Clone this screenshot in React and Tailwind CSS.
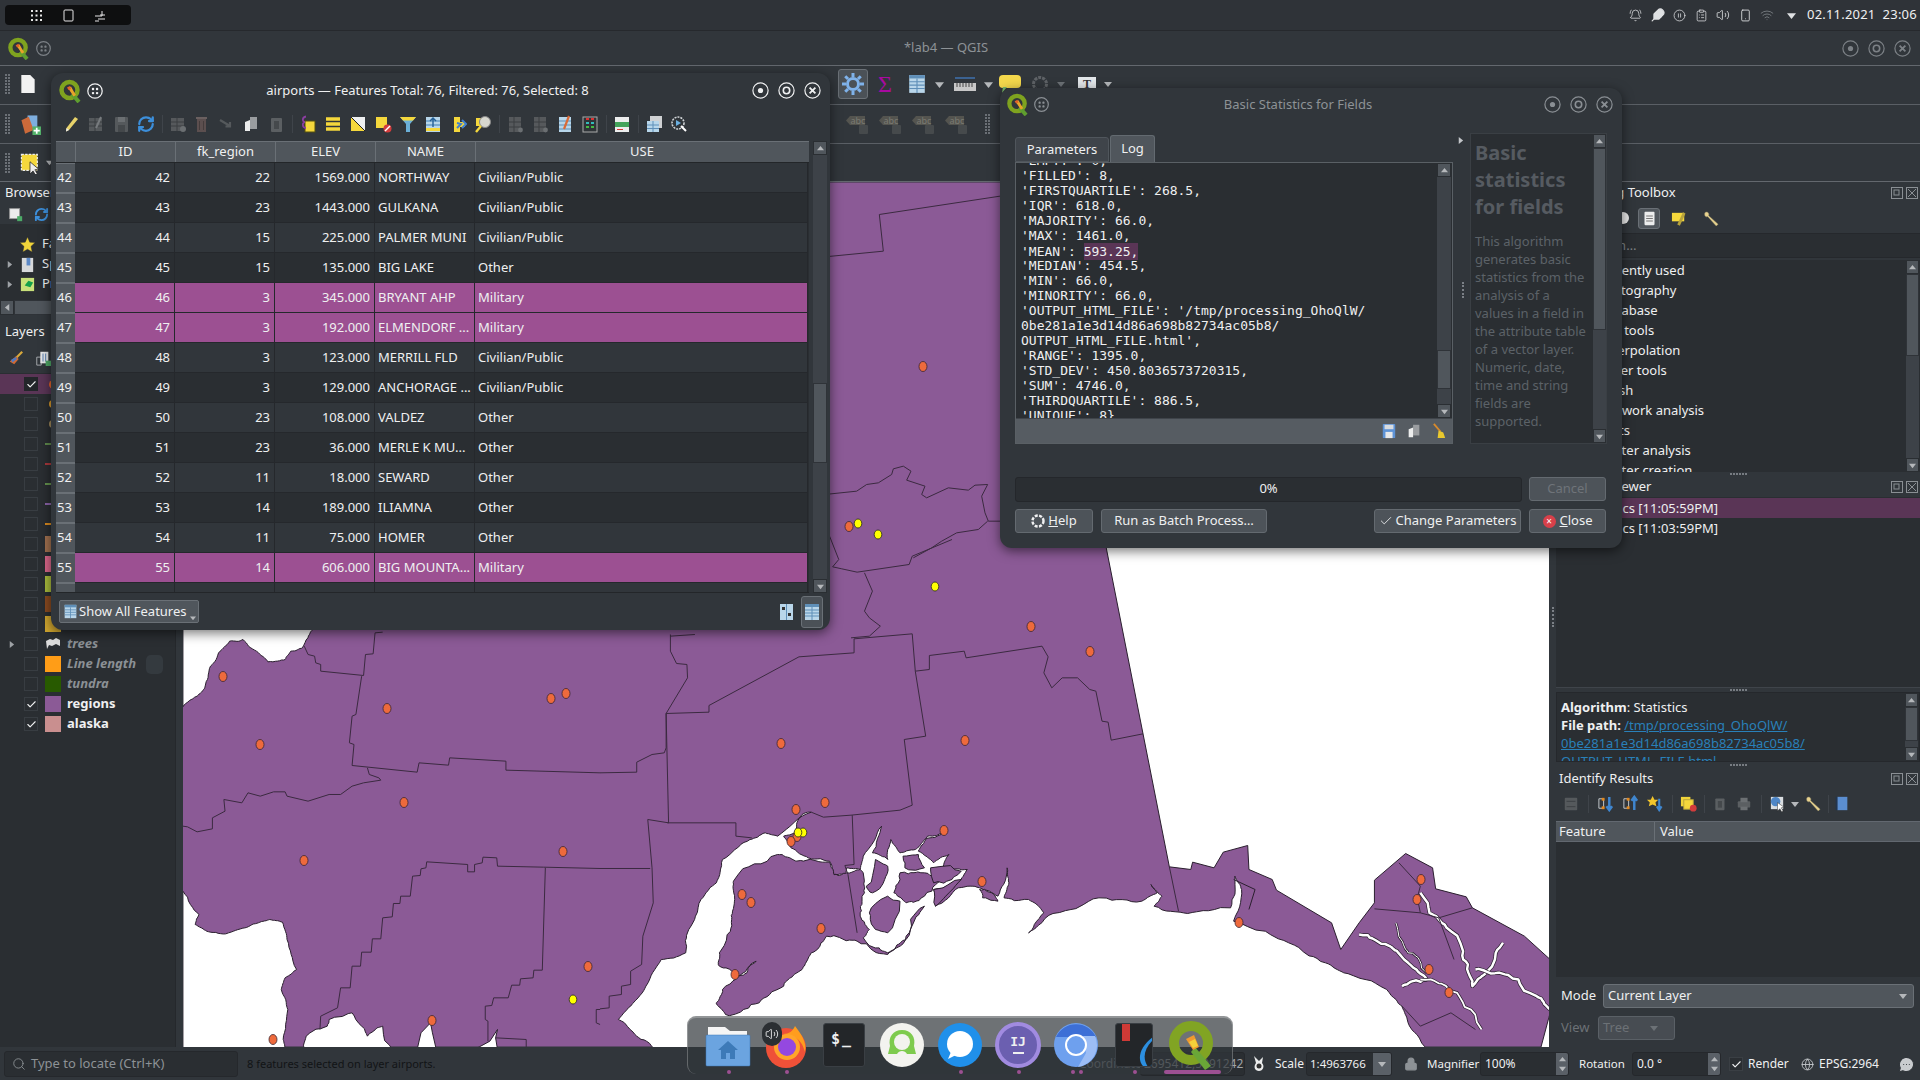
import React from 'react';
import { BellRing, Feather, CirclePause, ClipboardList, Volume2, Smartphone, Wifi, Search, RefreshCw, Check, Lock, Globe, MessageCircleMore } from 'lucide-react';

const Logo = ({ s = 22 }) => (
  <svg width={s} height={s} viewBox="0 0 24 24" className="shrink-0">
    <circle cx="11.5" cy="11" r="8" fill="none" stroke="#7fa31f" strokeWidth="4.5" />
    <path d="M14 15 L21 23" stroke="#5f9e2f" strokeWidth="4" />
    <path d="M10 9 L13 7.5 L15.5 12 L18 16 L15.5 17.5 Z" fill="#e8a32a" />
    <path d="M9 8.5 L12 7 L13 10 L10.5 11 Z" fill="#e2632a" />
  </svg>
);
const Grip = ({ c = '#a0a4a8', s = 20 }) => (
  <svg width={s} height={s} viewBox="0 0 20 20" className="shrink-0">
    <circle cx="10" cy="10" r="8" fill="none" stroke={c} strokeWidth="1.4" />
    <g fill={c}><rect x="6.5" y="6.5" width="2.6" height="2.6" rx="1" /><rect x="11" y="6.5" width="2.6" height="2.6" rx="1" /><rect x="6.5" y="11" width="2.6" height="2.6" rx="1" /><rect x="11" y="11" width="2.6" height="2.6" rx="1" /></g>
  </svg>
);
const WinBtns = ({ c, gap }) => (
  <div className={`flex items-center ${gap}`}>
    <svg width="17" height="17" viewBox="0 0 17 17"><circle cx="8.5" cy="8.5" r="7.6" fill="none" stroke={c} strokeWidth="1.2" /><circle cx="8.5" cy="8.5" r="2.6" fill={c} /></svg>
    <svg width="17" height="17" viewBox="0 0 17 17"><circle cx="8.5" cy="8.5" r="7.6" fill="none" stroke={c} strokeWidth="1.2" /><circle cx="8.5" cy="8.5" r="3.2" fill="none" stroke={c} strokeWidth="1.6" /></svg>
    <svg width="17" height="17" viewBox="0 0 17 17"><circle cx="8.5" cy="8.5" r="7.6" fill="none" stroke={c} strokeWidth="1.2" /><path d="M5.6 5.6 L11.4 11.4 M11.4 5.6 L5.6 11.4" stroke={c} strokeWidth="1.8" /></svg>
  </div>
);
const Handle = ({ h = 'h-[20px]' }) => (
  <div className={`grid grid-cols-2 gap-x-[1px] gap-y-[1px] w-[5px] ${h} shrink-0 overflow-hidden content-start`}>
    {Array.from({ length: 14 }).map((_, i) => <span key={i} className="w-[2px] h-[2px] bg-[#6b7076]" />)}
  </div>
);
const Caret = ({ c = '#b5b8bb', dir = 'down', s = 8 }) => (
  <svg width={s} height={s} viewBox="0 0 8 8" className="shrink-0">
    {dir === 'down' && <path d="M0 2 H8 L4 7 Z" fill={c} />}
    {dir === 'up' && <path d="M0 6 H8 L4 1 Z" fill={c} />}
    {dir === 'right' && <path d="M2 0 V8 L7 4 Z" fill={c} />}
    {dir === 'left' && <path d="M6 0 V8 L1 4 Z" fill={c} />}
  </svg>
);
const Sep = ({ cls = 'mx-[3px]' }) => <span className={`w-px h-[18px] bg-[#3f444a] shrink-0 ${cls}`} />;

const Y = '#f5d83c';
const icons = {
  pencil: <><path d="M13 2 L16 4 L7 15 L4 16.5 L4.5 13 Z" fill="#e8d36a" /><path d="M4.5 13 L4 16.5 L7 15 Z" fill="#eee" /></>,
  gtable: <><rect x="2" y="3" width="13" height="13" fill="#55595c" /><path d="M2 7H15M2 11H15M8 3V16" stroke="#3a3e41" /><path d="M14 2 L9 13" stroke="#777b7e" strokeWidth="2" /></>,
  gsave: <><rect x="3" y="2" width="13" height="15" rx="1" fill="#55595c" /><rect x="6" y="2" width="7" height="5" fill="#6b6f72" /><rect x="6" y="10" width="7" height="7" fill="#44484b" /></>,
  gadd: <><rect x="2" y="3" width="13" height="13" fill="#56595c" /><path d="M2 7H15M2 11H15M8 3V16" stroke="#3a3e41" /><circle cx="14" cy="14" r="3" fill="#6b6f72" /></>,
  gtrash: <><rect x="5" y="4" width="9" height="13" fill="#5c4f4f" /><path d="M4 3H15" stroke="#6a6060" strokeWidth="2" /><path d="M7.5 6V15M11.5 6V15" stroke="#453c3c" /></>,
  garrow: <path d="M3 5 L13 11 M13 7 V11.5 H8.5" stroke="#55595c" strokeWidth="2.2" fill="none" />,
  copy: <><rect x="8" y="2" width="7" height="12" fill="#9a9da0" /><path d="M3 7 L8 5 V16 H3 Z" fill="#eceded" /></>,
  gpaste: <><rect x="4" y="3" width="11" height="14" rx="1" fill="#5b5f62" /><rect x="7" y="6" width="5" height="8" fill="#45494c" /></>,
  selexp: <><rect x="6" y="6" width="10" height="11" fill={Y} stroke="#55500f" /><path d="M7 1.5 C3 2 3 7 6 7 C3 7 3 13 7 13" stroke="#8a3ea0" strokeWidth="1.8" fill="none" /></>,
  selall: <path d="M2 4 H16 M2 9 H16 M2 14 H16" stroke={Y} strokeWidth="3.4" />,
  invert: <><rect x="2" y="2" width="14" height="14" fill={Y} /><path d="M2 2 H16 V16 Z" fill="#eef0f1" /><path d="M2 2 L16 16" stroke="#222" /></>,
  desel: <><rect x="2" y="2" width="11" height="11" fill={Y} /><circle cx="13.5" cy="13.5" r="4" fill="#d23c3c" /><path d="M11 16 L16 11" stroke="#fff" strokeWidth="1.4" /></>,
  funnel: <><path d="M1 2 H17 L11 9 V17 H7 V9 Z" fill="#6bb0d8" /><path d="M1 2 H17 L14 5.5 H4 Z" fill={Y} /></>,
  blue: <><rect x="2" y="2" width="14" height="15" fill="#b7d6ea" /><path d="M2 6H16M2 10H16" stroke="#3f7fb5" /><path d="M9 3V12M6 6 L9 3 L12 6" stroke="#245f96" strokeWidth="1.4" fill="none" /><rect x="2" y="13" width="14" height="3" fill={Y} /></>,
  pan: <><path d="M5 2 H11 V7 H16 V12 H11 V17 H5 Z" fill={Y} /><path d="M13 5 L17 9 L13 13 M8 8 L12 9 L8 13" fill="none" stroke="#3f7fd0" strokeWidth="2" /></>,
  zoomsel: <><rect x="2" y="3" width="8" height="8" fill={Y} /><circle cx="11" cy="7" r="5.5" fill="#d7d7cf" stroke="#888" /><path d="M7 11 L2 17" stroke={Y} strokeWidth="2.4" /></>,
  gcol: <><rect x="3" y="2" width="12" height="15" fill="#56595c" /><path d="M8 2V17M3 7H15M3 12H15" stroke="#3a3e41" /><circle cx="14.5" cy="15" r="2.4" fill="#6b6f72" /></>,
  calc: <><rect x="3" y="2" width="12" height="15" fill="#b7d6ea" /><path d="M3 6H15M3 10H15M3 14H15" stroke="#5f8fb8" /><path d="M13 1 L8 14" stroke="#d96a38" strokeWidth="2.2" /></>,
  abacus: <><rect x="2" y="2" width="14" height="15" fill="#2f3438" stroke="#aaa" /><path d="M5 4h3M10 4h3" stroke="#d33" strokeWidth="2" /><path d="M5 8h3M10 8h3" stroke="#3bb" strokeWidth="2" /><path d="M5 12h3M10 12h3" stroke="#4b4" strokeWidth="2" /></>,
  cond: <><rect x="2" y="2" width="14" height="5" fill="#eceded" /><rect x="2" y="7" width="14" height="5" fill="#43a35a" /><rect x="2" y="12" width="14" height="5" fill="#eceded" /><path d="M4 14.5H10" stroke="#d33" /></>,
  dock: <><rect x="5" y="1" width="12" height="12" fill="#cfd1d3" /><rect x="2" y="6" width="12" height="11" fill="#b7d6ea" /><path d="M2 10H14M2 13.5H14M8 6V17" stroke="#5f8fb8" /></>,
  action: <><circle cx="8" cy="8" r="6" fill="#2f3438" stroke="#cfd3d6" strokeWidth="1.6" strokeDasharray="2 1" /><path d="M6 5 L11 8 L6 11 Z" fill="#6bb0e0" /><path d="M11 11 L16 16" stroke="#fff" strokeWidth="2" /></>,
  newdoc: <path d="M3 1 H11 L15 5 V17 H3 Z" fill="#f2f2f2" />,
  newl: <><path d="M7 2 L15 2 V14 L7 14 Z" fill="#7eaede" /><path d="M2 6 L8 3 L12 14 L5 17 Z" fill="#cc6a3a" /><rect x="11" y="11" width="7" height="7" fill="#54b26a" /><path d="M14.5 12 V17 M12 14.5 H17" stroke="#fff" strokeWidth="1.4" /></>,
  selcur: <><rect x="2" y="2" width="13" height="13" fill={Y} stroke="#eee" strokeDasharray="2 1" /><path d="M9 8 V18 L11.5 15.5 L13.5 19 L15 18 L13 14.5 L16 14 Z" fill="#eee" stroke="#222" strokeWidth=".6" /></>,
  newbr: <><rect x="2" y="2" width="12" height="12" fill="#ececec" stroke="#999" /><rect x="11" y="11" width="6" height="6" fill="#4caa68" /></>,
  star: <path d="M9 1 L11.4 6.5 L17 7 L12.7 11 L14 17 L9 14 L4 17 L5.3 11 L1 7 L6.6 6.5 Z" fill="#f0d43a" stroke="#333" strokeWidth=".5" />,
  book: <><path d="M3 2 H15 V17 H3 Z" fill="#d7d9db" /><rect x="8" y="2" width="4" height="8" fill="#5d89c7" /></>,
  proj: <><rect x="2" y="2" width="14" height="14" fill="#c8e07a" /><path d="M6 10 L10 5 L15 7 L12 12 Z" fill="#14a04a" /></>,
  brush: <><path d="M16 2 L9 9" stroke="#d8a93c" strokeWidth="2.4" /><path d="M9 7 L12 10 L7 16 L2 13 Z" fill="#d16b35" /><path d="M3.5 11 L9 8 L10 10 L5 14 Z" fill="#4d79c4" /></>,
  laycopy: <><path d="M2 8 H7 V17 H2 Z" fill="none" stroke="#aeb1b4" /><rect x="6" y="2" width="9" height="13" fill="#e7e8e9" /><path d="M9 4V13M12 4V13" stroke="#4771a8" /><rect x="12" y="12" width="6" height="6" fill="#4fa966" /></>,
  gdoc: <><rect x="3" y="1" width="12" height="16" fill="#eceded" rx="1" /><path d="M5 6H13M5 9H13M5 12H13" stroke="#777" strokeWidth="1.4" /></>,
  flagpen: <><rect x="1" y="3" width="13" height="9" fill={Y} /><path d="M14 3 L8 16" stroke="#b7a33c" strokeWidth="3" /></>,
  wrench: <><path d="M2 3 C4 1 7 3 6 6 L16 15 L14 17 L5 7 C3 8 1 6 2 3 Z" fill="#e8d38f" stroke="#9a8f6a" strokeWidth=".5" /></>,
  gcollapse: <><rect x="2" y="2" width="14" height="14" rx="1" fill="#55595c" /><path d="M4 6H14M4 12H14" stroke="#3a3e41" /></>,
  expdn: <><path d="M2 4 H7 V14 H2 Z" fill="none" stroke="#c8ccd0" /><rect x="5" y="3" width="3" height="3" fill="#e28a20" /><rect x="5" y="12" width="3" height="3" fill="#e28a20" /><path d="M13 2 V15 M10 12 L13 16 L16 12" stroke="#3f86cf" strokeWidth="2.6" fill="none" /></>,
  expup: <><path d="M2 4 H7 V14 H2 Z" fill="none" stroke="#c8ccd0" /><rect x="5" y="3" width="3" height="3" fill="#e28a20" /><rect x="5" y="12" width="3" height="3" fill="#e28a20" /><path d="M13 16 V3 M10 6 L13 2 L16 6" stroke="#3f86cf" strokeWidth="2.6" fill="none" /></>,
  expnew: <><path d="M7 1 L9 5 L13 5 L10 8 L11 12 L7 10 L3 12 L4 8 L1 5 L5 5 Z" fill="#f2c52b" /><path d="M14 4 V15 M11.5 12 L14 16 L16.5 12" stroke="#3f86cf" strokeWidth="2.2" fill="none" /></>,
  clear: <><rect x="1" y="2" width="10" height="10" fill="#f0d43a" /><rect x="4" y="5" width="10" height="10" fill={Y} stroke="#b7a33c" /><circle cx="14" cy="14" r="3.6" fill="#d23c3c" /></>,
  gprint: <><rect x="2" y="6" width="14" height="7" rx="1" fill="#5b5f62" /><rect x="5" y="2" width="8" height="5" fill="#6c7073" /><rect x="5" y="12" width="8" height="4" fill="#6c7073" /></>,
  identify: <><rect x="2" y="2" width="13" height="13" fill="#d9dde0" /><circle cx="7" cy="7" r="5" fill="#4e86c6" /><path d="M9 8 V17 L11.5 14.5 L13.5 18 L15 17 L13 13.5 L16 13 Z" fill="#fff" stroke="#222" strokeWidth=".5" /></>,
  help: <><rect x="4" y="1" width="12" height="16" fill="#5b8ed0" /><rect x="2" y="1" width="2" height="16" fill="#21354f" /></>,
  save: <><rect x="2" y="1" width="14" height="16" rx="1" fill="#5e93d6" /><rect x="4" y="2" width="10" height="5" fill="#d9dcdf" /><rect x="5" y="10" width="8" height="7" fill="#e7e8e9" /></>,
  broom: <><path d="M3 1 L10 9" stroke="#d88a2c" strokeWidth="2" /><path d="M8 8 L13 10 L15 16 H7 Z" fill="#e9c82e" /></>,
  formview: <><rect x="2" y="1" width="13" height="16" fill="#b9d6ea" /><path d="M8.5 1V17" stroke="#5f8fb8" /><rect x="4" y="4" width="3" height="3" fill="#333" /><rect x="10" y="10" width="3" height="3" fill="#333" /></>,
  tableview: <><rect x="2" y="1" width="14" height="16" fill="#b9d6ea" /><rect x="2" y="1" width="14" height="3" fill="#5f8fb8" /><path d="M2 7H16M2 10H16M2 13H16M9 4V17" stroke="#5f8fb8" /></>,
};
const I = ({ k, s = 18, cls = '' }) => <svg width={s} height={s} viewBox="0 0 18 18" className={`shrink-0 ${cls}`}>{icons[k]}</svg>;
const Refresh = ({ s = 18, cls = '' }) => <RefreshCw size={s} strokeWidth={3} color="#3c8fdb" className={`shrink-0 ${cls}`} />;

const Scroll = ({ top, thumb, w = 'w-[14px]' }) => (
  <div className={`flex flex-col shrink-0 ${w} h-full bg-[#3d4248]`}>
    <div className="h-[14px] shrink-0 bg-[#50565c] border border-[#2a2e32] flex items-center justify-center"><Caret dir="up" s={7} /></div>
    <div className={`shrink-0 ${top}`} />
    <div className={`shrink-0 ${thumb} bg-[#50565c] border border-[#2f3338]`} />
    <div className="flex-1" />
    <div className="h-[14px] shrink-0 bg-[#50565c] border border-[#2a2e32] flex items-center justify-center"><Caret dir="down" s={7} /></div>
  </div>
);

const rows = [
  [42, 22, '1569.000', 'NORTHWAY', 'Civilian/Public'],
  [43, 23, '1443.000', 'GULKANA', 'Civilian/Public'],
  [44, 15, '225.000', 'PALMER MUNI', 'Civilian/Public'],
  [45, 15, '135.000', 'BIG LAKE', 'Other'],
  [46, 3, '345.000', 'BRYANT AHP', 'Military', 1],
  [47, 3, '192.000', 'ELMENDORF ...', 'Military', 1],
  [48, 3, '123.000', 'MERRILL FLD', 'Civilian/Public'],
  [49, 3, '129.000', 'ANCHORAGE ...', 'Civilian/Public'],
  [50, 23, '108.000', 'VALDEZ', 'Other'],
  [51, 23, '36.000', 'MERLE K MU...', 'Other'],
  [52, 11, '18.000', 'SEWARD', 'Other'],
  [53, 14, '189.000', 'ILIAMNA', 'Other'],
  [54, 11, '75.000', 'HOMER', 'Other'],
  [55, 14, '606.000', 'BIG MOUNTA...', 'Military', 1],
  [56, 7, '70.000', 'DILLINGHAM', 'Civilian/Public'],
];
const colGrid = 'grid grid-cols-[19px_100px_100px_100px_100px_333px]';

const AttributeWindow = () => (
  <div className="absolute left-[51px] top-[73px] w-[779px] h-[557px] bg-[#31363b] rounded-[12px] shadow-[0_3px_12px_rgba(0,0,0,0.55)] flex flex-col overflow-hidden">
    <div className="h-[35px] shrink-0 relative flex items-center pl-[7px] pr-[9px]">
      <Logo s={24} />
      <span className="ml-[4px]"><Grip c="#eff0f1" s={18} /></span>
      <span className="flex-1 text-center text-[13px] text-[#eff0f1] pr-[1px]">airports — Features Total: 76, Filtered: 76, Selected: 8</span>
      <WinBtns c="#eff0f1" gap="gap-[9px]" />
    </div>
    <div className="h-[33px] shrink-0 flex items-center pl-[11px] pb-[2px]">
      {['pencil', 'gtable', 'gsave'].map(k => <I key={k} k={k} cls="mr-[7px]" />)}
      <Refresh cls="mr-[7px]" />
      <Sep cls="mr-[6px]" />
      <span className="mr-[5px]"><I k="gadd" /></span>
      <I k="gtrash" cls="mr-[7px]" /><I k="garrow" cls="mr-[7px]" /><I k="copy" cls="mr-[7px]" /><I k="gpaste" cls="mr-[7px]" />
      <Sep cls="mr-[6px]" />
      {['selexp', 'selall', 'invert', 'desel', 'funnel', 'blue', 'pan', 'zoomsel'].map(k => <I key={k} k={k} cls="mr-[7px]" />)}
      <Sep cls="mr-[6px]" />
      {['gcol', 'gcol', 'calc', 'abacus'].map((k, i) => <I key={i} k={k} cls="mr-[7px]" />)}
      <Sep cls="mr-[6px]" />
      <I k="cond" cls="mr-[7px]" /><Sep cls="mr-[6px]" />
      <I k="dock" cls="mr-[7px]" /><I k="action" />
    </div>
    <div className="flex pl-[5px] h-[452px] shrink-0">
      <div className="w-[753px] h-full overflow-hidden bg-[#2a2e32] border-b border-[#232629]">
        <div className={`${colGrid} h-[22px] border-t border-[#6a7076] border-b border-b-[#232629] bg-[#50565c] text-[13px] text-[#eff0f1]`}>
          <span />
          {['ID', 'fk_region', 'ELEV', 'NAME', 'USE'].map(h => <span key={h} className="flex items-center justify-center border-l border-[#6a7076]">{h}</span>)}
        </div>
        {rows.map((r, i) => {
          const sel = r[5];
          const bg = sel ? 'bg-[#9c5092]' : i % 2 ? 'bg-[#2a2e32]' : 'bg-[#31363b]';
          return (
            <div key={r[0]} className={`${colGrid} h-[30px] text-[13px] text-[#eff0f1]`}>
              <span className="bg-[#50565c] border-y border-[#6a7076] flex items-center pl-[1px]">{r[0]}</span>
              {[[r[0], 'justify-end pr-[4px]'], [r[1], 'justify-end pr-[4px]'], [r[2], 'justify-end pr-[4px]'], [r[3], 'pl-[3px]'], [r[4], 'pl-[3px]']].map(([v, c], j) => (
                <span key={j} className={`${bg} border-b border-r border-[#25282c] flex items-center whitespace-nowrap overflow-hidden ${c}`}>{v}</span>
              ))}
            </div>
          );
        })}
      </div>
      <div className="w-[4px]" />
      <div className="w-[14px] h-full"><Scroll top="h-[228px]" thumb="h-[80px]" /></div>
    </div>
    <div className="flex-1 flex items-center pl-[8px] pr-[7px]">
      <div className="h-[23px] w-[140px] bg-[#50565c] border border-[#6a7076] rounded-[2px] flex items-center pl-[3px] text-[13px] text-[#eff0f1] relative">
        <I k="tableview" s={15} /><span className="ml-[1px]">Show All Features</span>
        <span className="absolute right-[2px] bottom-[1px]"><Caret s={6} /></span>
      </div>
      <div className="flex-1" />
      <I k="formview" />
      <div className="ml-[5px] w-[22px] h-[32px] bg-[#4b5157] border border-[#6a7076] rounded-[3px] flex items-center justify-center"><I k="tableview" /></div>
    </div>
  </div>
);

const logLines = ["'EMPTY': 0,", "'FILLED': 8,", "'FIRSTQUARTILE': 268.5,", "'IQR': 618.0,", "'MAJORITY': 66.0,", "'MAX': 1461.0,", 'MEAN', "'MEDIAN': 454.5,", "'MIN': 66.0,", "'MINORITY': 66.0,", "'OUTPUT_HTML_FILE': '/tmp/processing_OhoQlW/", '0be281a1e3d14d86a698b82734ac05b8/', "OUTPUT_HTML_FILE.html',", "'RANGE': 1395.0,", "'STD_DEV': 450.8036573720315,", "'SUM': 4746.0,", "'THIRDQUARTILE': 886.5,", "'UNIQUE': 8}"];
const help = ['This algorithm', 'generates basic', 'statistics from the', 'analysis of a', 'values in a field in', 'the attribute table', 'of a vector layer.', 'Numeric, date,', 'time and string', 'fields are', 'supported.'];
const Btn = ({ w, children, cls = '' }) => (
  <div className={`${w} h-[24px] shrink-0 bg-[#4d5359] border border-[#646a70] rounded-[3px] text-[13px] text-[#eff0f1] flex items-center justify-center ${cls}`}>{children}</div>
);

const StatsWindow = () => (
  <div className="absolute left-[1000px] top-[88px] w-[622px] h-[460px] bg-[#31363b] rounded-[12px] shadow-[0_3px_12px_rgba(0,0,0,0.55)] overflow-hidden flex flex-col">
    <div className="h-[33px] shrink-0 flex items-center pl-[6px] pr-[9px]">
      <Logo s={23} />
      <span className="ml-[4px]"><Grip c="#8a8f94" s={17} /></span>
      <span className="flex-1 text-center text-[13px] text-[#8d9296] pl-[2px]">Basic Statistics for Fields</span>
      <WinBtns c="#8a8f94" gap="gap-[9px]" />
    </div>
    <div className="flex pl-[15px] h-[323px] shrink-0">
      <div className="w-[438px] flex flex-col pt-[13px]">
        <div className="flex items-end h-[28px] shrink-0">
          <div className="w-[94px] h-[25px] bg-[#3f444a] border border-[#50565c] rounded-t-[3px] text-[13px] text-[#eff0f1] flex items-center justify-center">Parameters</div>
          <div className="ml-px w-[45px] h-[27px] bg-[#50565c] border border-[#636a70] border-b-0 rounded-t-[3px] text-[13px] text-[#eff0f1] flex items-center justify-center">Log</div>
        </div>
        <div className="h-[282px] border border-[#5a6065] flex flex-col bg-[#2a2e32]">
          <div className="h-[255px] flex overflow-hidden">
            <div className="flex-1 overflow-hidden pl-[5px] font-['DejaVu_Sans_Mono',monospace] text-[13px] leading-[15px] text-[#eff0f1]">
              <div className="-mt-[10px]">
                {logLines.map(l => l === 'MEAN'
                  ? <div key={l} className="h-[15px] whitespace-pre">{"'MEAN': "}<span className="bg-[#5a3556] inline-block leading-[17px] h-[17px]">593.25,</span></div>
                  : <div key={l} className="h-[15px] whitespace-pre">{l}</div>)}
              </div>
            </div>
            <div className="w-[14px] h-full mr-[1px]"><Scroll top="h-[173px]" thumb="h-[39px]" /></div>
          </div>
          <div className="flex-1 bg-[#565c62] border-t border-[#3f444a] flex items-center justify-end gap-[9px] pr-[4px]">
            <I k="save" s={16} /><I k="copy" s={16} /><I k="broom" s={17} />
          </div>
        </div>
      </div>
      <div className="w-[17px] relative">
        <span className="absolute left-[4px] top-[16px]"><Caret dir="right" s={7} c="#c3c6c9" /></span>
        <span className="absolute left-[9px] top-[161px] w-[2px] h-[16px] border-l-2 border-dotted border-[#7b8086]" />
      </div>
      <div className="w-[137px] h-[311px] mt-[12px] bg-[#2a2e32] border border-[#3a3f44] flex overflow-hidden">
        <div className="flex-1 pl-[4px] overflow-hidden">
          <div className="text-[20px] leading-[27px] font-bold text-[#565b61] mt-[5px]">Basic<br />statistics<br />for fields</div>
          <div className="text-[13px] leading-[18px] text-[#5c6268] mt-[12px] whitespace-nowrap">{help.map(h => <div key={h}>{h}</div>)}</div>
        </div>
        <div className="w-[13px] h-full"><Scroll w="w-[13px]" top="h-0" thumb="h-[182px]" /></div>
      </div>
    </div>
    <div className="h-[32px] shrink-0" />
    <div className="flex pl-[15px] items-center h-[26px] shrink-0">
      <div className="w-[507px] h-[25px] bg-[#2a2e32] border border-[#24272b] rounded-[3px] text-[13px] text-[#eff0f1] flex items-center justify-center">0%</div>
      <Btn w="w-[77px]" cls="ml-[7px] !text-[#6f7479]">Cancel</Btn>
    </div>
    <div className="flex pl-[15px] items-center h-[32px] shrink-0 mt-[3px]">
      <Btn w="w-[78px]"><svg width="14" height="14" viewBox="0 0 14 14" className="mr-[3px]"><circle cx="7" cy="7" r="5.5" fill="none" stroke="#eff0f1" strokeWidth="2.5" strokeDasharray="3 1.4" /></svg><span><span className="underline">H</span>elp</span></Btn>
      <Btn w="w-[166px]" cls="ml-[8px]">Run as Batch Process…</Btn>
      <Btn w="w-[147px]" cls="ml-[107px]"><Check size={14} strokeWidth={1.5} className="mr-[3px]" />Change Parameters</Btn>
      <Btn w="w-[77px]" cls="ml-[8px]"><span className="w-[13px] h-[13px] rounded-full bg-[#d8404a] mr-[4px] flex items-center justify-center text-[10px] leading-none text-white">×</span><span><span className="underline">C</span>lose</span></Btn>
    </div>
  </div>
);

const rough = (str, sx, sy, seed = 11, amp = 0.26, levels = 3, maxLen = 90) => {
  let p = str.trim().split(/\s+/).map(s => s.split(',').map(Number));
  let s = seed * 7919 + 13;
  const r = () => { s = (s * 16807) % 2147483647; return s / 2147483647 - 0.5; };
  for (let l = 0; l < levels; l++) {
    const n = [];
    p.forEach((a, i) => {
      const b = p[(i + 1) % p.length];
      const len = Math.hypot((a[0] - b[0]) * sx, (a[1] - b[1]) * sy);
      n.push(a);
      if (len > 2 && len < maxLen) n.push([(a[0] + b[0]) / 2 + (r() * amp * len) / sx, (a[1] + b[1]) / 2 + (r() * amp * len) / sy]);
    });
    p = n;
  }
  return p.map(q => q.map(v => v.toFixed(1)).join(',')).join(' ');
};

const dots = {
  orange: [[223, 677], [260, 745], [387, 709], [551, 699], [566, 694], [404, 803], [304, 861], [563, 852], [588, 967], [432, 1021], [273, 1040],
  [1031, 627], [1090, 652], [781, 744], [965, 741], [825, 803], [796, 810], [797, 837], [791, 842], [944, 831], [982, 882], [742, 895], [751, 903], [821, 929], [735, 975], [1239, 923], [1421, 880], [1417, 900], [1429, 970], [1449, 993], [849, 527], [923, 367]],
  yellow: [[573, 1000], [935, 587], [803, 833], [798, 833], [858, 524], [878, 535]],
};
const LN = '#3b2a40';
const CO = '#2a1f2e';
const MP = '#8b5a96';
const P = ({ p }) => <polyline points={p} fill="none" stroke={LN} strokeWidth="1" vectorEffect="non-scaling-stroke" strokeLinejoin="round" />;
const W = ({ p }) => <polygon points={p} fill="#ffffff" stroke={CO} strokeWidth="1" vectorEffect="non-scaling-stroke" strokeLinejoin="round" />;
const M = ({ p }) => <polygon points={p} fill={MP} stroke={CO} strokeWidth="1" vectorEffect="non-scaling-stroke" strokeLinejoin="round" />;
const Ch = ({ p, w = 2.5 }) => (
  <>
    <polyline points={p} fill="none" stroke={CO} strokeWidth={w + 1.4} vectorEffect="non-scaling-stroke" strokeLinejoin="round" />
    <polyline points={p} fill="none" stroke="#fff" strokeWidth={w} vectorEffect="non-scaling-stroke" strokeLinejoin="round" />
  </>
);
const roughOpen = (str, seed) => {
  const closed = rough(str, 0.6122, 0.3333, seed, 0.3, 3, 200).split(' ');
  const first = str.trim().split(/\s+/).length;
  return closed.slice(0, Math.max(first, closed.length - 7)).join(' ');
};

const MapDrawing = () => (
  <svg className="absolute inset-0 w-full h-full" viewBox="183 183 1366 864">
    <rect x="183" y="183" width="1366" height="864" fill={MP} />
    <g transform="translate(0 620) scale(0.3827 0.33333)">
      <W p={rough('478,-40 830,-40 815,33 790,85 760,95 745,120 700,127 670,95 635,60 600,65 575,95 550,140 535,205 515,230 478,262', 0.3827, 0.3333, 3, 0.16, 3, 60)} />
      <W p={rough('478,815 520,885 510,915 540,935 590,943 640,925 675,910 705,900 738,908 750,960 775,1050 745,1075 735,1110 752,1170 740,1260 745,1290 478,1290', 0.3827, 0.3333, 5, 0.12, 3, 40)} />
      <W p={rough('795,1290 800,1250 855,1220 860,1200 920,1180 945,1220 960,1250 985,1225 1000,1220 1025,1290', 0.3827, 0.3333, 4, 0.25, 2, 40)} />
      <W p="1090,1290 1100,1240 1125,1210 1130,1240 1140,1290" />
      <W p="1240,1290 1280,1265 1300,1230 1295,1255 1300,1290" />
      <P p="795,80 805,105 822,110 825,130 838,135 838,155 950,168 955,105 975,103 980,40 1000,38" />
      <P p="945,170 930,285 920,290 913,370 925,375 920,438 1090,458 1095,430 1172,437 1175,415 1322,425 1322,452 1568,460" />
      <P p="960,445 965,465 990,475 995,482 950,490 920,500 890,525 860,525 805,545 750,530 745,517 715,517 680,530 648,520 632,550 585,540 588,575 555,595 555,628 515,637 490,622 478,620" />
      <P p="1568,747 1420,743 1300,740 1298,715 1262,713 1260,730 1240,735 1240,757 1222,757 1222,735 1115,727 1113,745 1100,748 1098,768 1078,770 1072,830 1047,830 1045,852 1028,852 1025,892 1000,895 995,958 973,958 970,998 945,998 942,1040 920,1040 915,1105 890,1105 882,1165 838,1190 836,1230" />
      <P p="1425,745 1417,1052 1395,1052 1393,1075 1360,1078 1358,1097 1337,1097 1328,1135 1290,1135 1285,1158 1268,1160 1268,1200 1275,1205 1275,1265" />
      <P p="1568,1170 1558,1170 1558,1210 1568,1215" />
      <P p="1295,1255 1375,1260 1375,1290" />
    </g>
    <g transform="translate(825 60) scale(0.33333)">
      <P p="0,592 175,575 163,465 525,410 560,405" />
      <P p="-100,1310 0,1305 95,1295 125,1275 160,1270 200,1245 205,1228 235,1220 258,1235 245,1262 300,1280 290,1305 305,1315 370,1285 430,1292 450,1277 488,1275 470,1310 480,1360 490,1385 525,1385 560,1395" />
      <P p="488,1385 460,1410 395,1420 350,1445 320,1465 265,1495" />
    </g>
    <g transform="translate(600 540) scale(0.6122 0.33333)">
      <W p="821,-30 930,982 965,990 968,968 1003,985 1018,938 1058,918 1060,990 1098,1020 1105,1052 1195,1150 1210,1230 1240,1150 1265,1090 1265,1022 1316,942 1360,985 1365,1048 1415,1072 1425,1105 1510,1190 1552,1260 1552,-30" />
      <W p={rough('345,818 330,825 318,880 300,890 312,925 340,955 375,965 382,1005 402,1005 403,985 425,990 430,950 460,860 445,940 470,960 475,900 490,940 515,930 530,900 560,880 535,890 520,935 545,970 570,945 560,985 600,990 585,1030 545,1050 548,1100 585,1045 620,1045 650,1070 665,985 668,1030 660,1075 700,1080 725,1120 700,1180 740,1122 815,1075 885,1085 910,1060 900,1035 918,1070 905,1100 960,1122 1030,1105 1037,1010 1048,1050 1035,1145 1125,1210 1185,1270 1215,1300 1285,1350 1310,1400 1320,1450 1350,1530 90,1530 60,1490 30,1440 50,1400 75,1340 100,1260 140,1240 145,1170 165,1080 190,1030 200,960 245,900 270,880 290,890', 0.6122, 0.3333, 2, 0.16, 3, 60)} />
      <M p={rough('218,1025 290,945 320,965 375,968 382,1005 403,1000 425,990 432,1060 425,1130 440,1170 430,1195 470,1240 500,1190 530,1100 500,1200 470,1245 420,1205 370,1190 345,1240 330,1290 300,1340 260,1390 205,1425 190,1390 205,1340 240,1300 255,1265 222,1310 195,1280 195,1240 215,1140 220,1080', 0.6122, 0.3333, 7, 0.3, 3, 60)} />
      <M p={rough('545,1050 590,1020 570,1060 548,1100', 0.6122, 0.3333, 9, 0.3, 2, 60)} />
      <M p={rough('490,1000 530,1000 560,1020 530,1070 500,1090 480,1060', 0.6122, 0.3333, 12, 0.3, 3, 60)} />
      <M p={rough('450,960 470,980 465,1020 445,1060 435,1040', 0.6122, 0.3333, 14, 0.3, 2, 60)} />
      <M p={rough('495,950 520,945 530,985 498,985', 0.6122, 0.3333, 15, 0.3, 2, 60)} />
      <M p={rough('540,985 590,995 575,1020 545,1030', 0.6122, 0.3333, 16, 0.3, 2, 60)} />
      <M p={rough('440,1120 470,1070 490,1085 470,1180 450,1170', 0.6122, 0.3333, 18, 0.3, 2, 60)} />
      <M p={rough('620,1050 640,1060 650,1085 625,1075', 0.6122, 0.3333, 19, 0.3, 2, 60)} />
      <W p="1536,1530 1552,1420 1552,1530" />
      <Ch p={roughOpen('1240,1185 1290,1220 1320,1270 1350,1320 1310,1340', 21)} />
      <Ch p={roughOpen('1340,1060 1375,1150 1410,1260 1425,1340 1450,1295 1475,1210', 22)} />
      <Ch p={roughOpen('1430,1290 1470,1300 1530,1370 1552,1410', 23)} />
      <Ch p={roughOpen('1340,1320 1400,1360 1440,1470', 24)} w={1.8} />
      <Ch p={roughOpen('1300,1150 1320,1240 1350,1300', 25)} w={1} />
      <polyline points="1035,1020 1070,1050 1060,1110" fill="none" stroke={CO} strokeWidth="1" vectorEffect="non-scaling-stroke" />
      <P p="115,290 155,285" />
      <P p="115,285 115,335 125,372 142,375 143,415 108,522 108,625 105,640 85,645 60,668 60,698 0,700" />
      <P p="108,522 178,518 178,498 325,352 415,340 415,298 510,283 515,395 532,590 497,600 510,797 490,812 410,827 365,833 345,818" />
      <P p="410,295 440,290 458,260 440,235 432,215 445,155 432,100" />
      <P p="380,82 395,88 420,98 505,75 510,50 575,0" />
      <P p="375,-10 390,60 380,82" />
      <P p="515,395 538,390 538,348 595,335 598,355 722,320 732,352 725,400 738,445 755,415 780,415 800,450 810,455 820,545 830,548 835,602 887,583" />
      <P p="412,827 415,975 400,978 405,1005 420,1180" />
      <P p="110,850 222,850 222,890 248,895" />
      <P p="108,522 112,850 78,840 85,985 87,1090 70,1190 68,1275 50,1295 50,1335 35,1340 35,1365 15,1370 15,1405 0,1408" />
      <P p="0,987 82,987" />
      <P p="930,982 945,1115" />
      <P p="1305,970 1340,1040 1335,1075 1340,1120 1370,1135 1425,1105" />
      <P p="1265,1108 1340,1120" />
      <P p="1370,1135 1395,1260" />
      <P p="1310,1400 1340,1460 1390,1420 1430,1470" />
    </g>
    {dots.orange.map(([x, y], i) => <ellipse key={i} cx={x} cy={y} rx="4" ry="5" fill="#ee6a3c" stroke="#3b2530" strokeWidth="0.8" />)}
    {dots.yellow.map(([x, y], i) => <ellipse key={i} cx={x} cy={y} rx="3.8" ry="4.5" fill="#ffff00" stroke="#222" strokeWidth="0.8" />)}
  </svg>
);

const layerRows = [
  ['dot', 'bg-[#e2632a]'], ['dot', 'bg-[#d99a2c]'], ['dot', 'bg-[#a08a5c]'], ['line', 'bg-[#5f8a4c]'], ['line', 'bg-[#a8383c]'], ['line', 'bg-[#64934e]'], ['line', 'bg-[#8a62a8]'], ['line', 'bg-[#d98a1f]'],
  ['box', 'bg-[#a0704f]'], ['box', 'bg-[#d9668a]'], ['box', 'bg-[#a9bb3c]'], ['box', 'bg-[#8a4a20]'], ['box', 'bg-[#cfa52f]'],
];
const LayerCheck = ({ on, active }) => (
  <span className={`w-[14px] h-[14px] shrink-0 flex items-center justify-center ${active ? 'bg-[#23262a]' : 'border border-[#383d42]'}`}>
    {on && <Check size={11} strokeWidth={2.4} color="#eff0f1" />}
  </span>
);
const LeftPanel = () => (
  <div className="w-[176px] h-full flex flex-col border-r border-[#25282c] text-[13px] text-[#eff0f1] shrink-0">
    <div className="h-[22px] flex items-center pl-[5px] shrink-0">Browser</div>
    <div className="h-[20px] flex items-center pl-[8px] gap-[11px] shrink-0"><I k="newbr" s={15} /><Refresh s={15} /></div>
    <div className="h-[76px] bg-[#2a2e32] pt-[10px] overflow-hidden shrink-0">
      {[['star', 'Favorites', 0], ['book', 'Spatial Bookmarks', 1], ['proj', 'Project Home', 1]].map(([k, t, a]) => (
        <div key={k} className="h-[20px] flex items-center relative pl-[19px]">
          {a ? <span className="absolute left-[6px]"><Caret dir="right" s={7} c="#9ea2a6" /></span> : null}
          <I k={k} s={17} /><span className="ml-[6px] whitespace-nowrap">{t}</span>
        </div>
      ))}
    </div>
    <div className="h-[15px] shrink-0 flex bg-[#3d4248]"><span className="w-[14px] bg-[#50565c] border border-[#2a2e32] flex items-center justify-center"><Caret dir="left" s={7} /></span><span className="flex-1 bg-[#50565c] border border-[#2f3338]" /></div>
    <div className="h-[28px] pt-[6px] flex items-center pl-[5px] shrink-0">Layers</div>
    <div className="h-[30px] flex items-center pl-[8px] gap-[11px] shrink-0"><I k="brush" s={16} /><I k="laycopy" s={16} /></div>
    <div className="flex-1 bg-[#2a2e32] pt-px">
      <div className="h-[20px] bg-[#5a3556] flex items-center pl-[24px]"><LayerCheck on active /><span className="ml-[7px] w-[16px] flex justify-center"><span className="w-[9px] h-[9px] rounded-full bg-[#e2632a]" /></span><span className="ml-[6px] font-bold">airports</span></div>
      {layerRows.slice(1).map(([t, c], i) => (
        <div key={i} className="h-[20px] flex items-center pl-[24px]">
          <LayerCheck />
          <span className="ml-[7px] w-[16px] h-full flex items-center justify-center">
            {t === 'dot' && <span className={`w-[8px] h-[8px] rounded-full ${c}`} />}
            {t === 'line' && <span className={`w-[16px] h-[2px] ${c}`} />}
            {t === 'box' && <span className={`w-[16px] h-[16px] ${c}`} />}
          </span>
        </div>
      ))}
      <div className="h-[20px] flex items-center relative pl-[24px]"><span className="absolute left-[8px]"><Caret dir="right" s={7} c="#9ea2a6" /></span><LayerCheck /><span className="ml-[7px] w-[16px] flex justify-center"><svg width="16" height="12" viewBox="0 0 16 12"><path d="M1 3 L5 1 L8 2 L11 0 L15 2 V8 L11 6 L7 8 L4 7 L2 11 Z" fill="#dcdcdc" /></svg></span><span className="ml-[6px] italic font-bold text-[#8b9095]">trees</span></div>
      <div className="h-[20px] flex items-center pl-[24px]"><LayerCheck /><span className="ml-[7px] w-[16px] h-[16px] bg-[#ff9d17]" /><span className="ml-[6px] italic font-bold text-[#8b9095]">Line length</span><span className="ml-[13px] w-[11px] h-[13px] bg-[#343a3f] rounded-[2px] shadow-[0_0_0_3px_#343a3f]" /></div>
      <div className="h-[20px] flex items-center pl-[24px]"><LayerCheck /><span className="ml-[7px] w-[16px] h-[16px] bg-[#285a00]" /><span className="ml-[6px] italic font-bold text-[#8b9095]">tundra</span></div>
      <div className="h-[20px] flex items-center pl-[24px]"><LayerCheck on /><span className="ml-[7px] w-[16px] h-[16px] bg-[#8b5a96]" /><span className="ml-[6px] font-bold">regions</span></div>
      <div className="h-[20px] flex items-center pl-[24px]"><LayerCheck on /><span className="ml-[7px] w-[16px] h-[16px] bg-[#c98f8f]" /><span className="ml-[6px] font-bold">alaska</span></div>
    </div>
  </div>
);

const DockTools = () => (
  <span className="flex gap-[3px] shrink-0">
    <svg width="12" height="12" viewBox="0 0 12 12"><rect x=".5" y=".5" width="11" height="11" fill="none" stroke="#8a8f94" /><rect x="3" y="3" width="5" height="5" fill="none" stroke="#8a8f94" /></svg>
    <svg width="12" height="12" viewBox="0 0 12 12"><rect x=".5" y=".5" width="11" height="11" fill="none" stroke="#8a8f94" /><path d="M2 2 L10 10 M10 2 L2 10" stroke="#8a8f94" /></svg>
  </span>
);
const Splitter = ({ h }) => (
  <div className={`${h} shrink-0 flex items-center justify-center gap-px`}>
    {[0, 1, 2, 3, 4, 5].map(i => <span key={i} className="w-[2px] h-[2px] bg-[#777c82]" />)}
  </div>
);
const RightPanel = () => (
  <div className="w-[371px] h-full pl-[7px] flex flex-col text-[13px] text-[#eff0f1] shrink-0 relative">
    <span className="absolute left-[3px] top-[425px] w-[2px] h-[20px] border-l-2 border-dotted border-[#7b8086]" />
    <div className="h-[21px] shrink-0 flex items-center pr-[2px]"><span className="flex-1 pl-[2px]">Processing Toolbox</span><DockTools /></div>
    <div className="h-[30px] shrink-0 flex items-center pl-[60px]">
      <svg width="14" height="16" viewBox="0 0 14 16"><circle cx="7" cy="8" r="6" fill="#e8e8e8" /></svg>
      <span className="ml-[8px] w-[22px] h-[21px] bg-[#50565c] border border-[#6a7076] rounded-[3px] flex items-center justify-center"><I k="gdoc" s={15} /></span>
      <span className="ml-[11px]"><I k="flagpen" s={17} /></span>
      <span className="ml-[15px]"><I k="wrench" s={17} /></span>
    </div>
    <div className="h-[25px] shrink-0 bg-[#2a2e32] border-y border-[#25282c] flex items-center pl-[29px] text-[#7f8488]">Search…</div>
    <div className="h-[212px] shrink-0 bg-[#2a2e32] flex mt-[2px] overflow-hidden">
      <div className="flex-1 pl-[44px] overflow-hidden">
        {['Recently used', 'Cartography', 'Database', 'File tools', 'Interpolation', 'Layer tools', 'Mesh', 'Network analysis', 'Plots', 'Raster analysis', 'Raster creation'].map(t => <div key={t} className="h-[20px] leading-[20px] whitespace-nowrap">{t}</div>)}
      </div>
      <div className="w-[13px] h-full mr-px"><Scroll w="w-[13px]" top="h-0" thumb="h-[82px]" /></div>
    </div>
    <Splitter h="h-[4px]" />
    <div className="h-[21px] shrink-0 flex items-center pr-[2px]"><span className="flex-1 pl-[7px]">Results Viewer</span><DockTools /></div>
    <div className="h-[191px] shrink-0 bg-[#2a2e32] border-b border-[#3f444a]">
      <div className="h-[20px] mt-px bg-[#5a3556] pl-[25px] leading-[20px]">Statistics [11:05:59PM]</div>
      <div className="h-[20px] pl-[25px] leading-[20px]">Statistics [11:03:59PM]</div>
    </div>
    <Splitter h="h-[4px]" />
    <div className="h-[70px] shrink-0 bg-[#2a2e32] border border-[#25282c] flex overflow-hidden">
      <div className="flex-1 pl-[4px] pt-[5px] leading-[18px] overflow-hidden">
        <div><b>Algorithm</b>: Statistics</div>
        <div><b>File path:</b> <span className="text-[#2980b9] underline">/tmp/processing_OhoQlW/</span></div>
        <div className="text-[#2980b9] underline">0be281a1e3d14d86a698b82734ac05b8/</div>
        <div className="text-[#2980b9] underline">OUTPUT_HTML_FILE.html</div>
      </div>
      <div className="w-[13px] h-full mr-px"><Scroll w="w-[13px]" top="h-0" thumb="h-[34px]" /></div>
    </div>
    <Splitter h="h-[6px]" />
    <div className="h-[21px] shrink-0 flex items-center pr-[2px]"><span className="flex-1 pl-[3px]">Identify Results</span><DockTools /></div>
    <div className="h-[29px] shrink-0 flex items-center">
      <I k="gcollapse" cls="ml-[7px]" s={16} />
      <Sep cls="ml-[9px]" />
      <I k="expdn" cls="ml-[8px]" s={17} /><I k="expup" cls="ml-[8px]" s={17} /><I k="expnew" cls="ml-[7px]" s={17} />
      <Sep cls="ml-[9px]" />
      <I k="clear" cls="ml-[7px]" s={17} />
      <Sep cls="ml-[7px]" />
      <I k="gpaste" cls="ml-[7px]" s={15} /><I k="gprint" cls="ml-[9px]" s={16} />
      <Sep cls="ml-[9px]" />
      <I k="identify" cls="ml-[7px]" s={17} /><span className="ml-[5px]"><Caret /></span><I k="wrench" cls="ml-[6px]" s={17} />
      <Sep cls="ml-[6px]" />
      <I k="help" cls="ml-[5px]" s={15} />
    </div>
    <div className="h-[156px] shrink-0 bg-[#2a2e32] mt-[3px]">
      <div className="h-[21px] bg-[#50565c] border-y border-[#626870] flex">
        <span className="w-[99px] border-r border-[#6a7076] pl-[3px] leading-[19px]">Feature</span>
        <span className="pl-[5px] leading-[19px]">Value</span>
      </div>
    </div>
    <div className="h-[38px] shrink-0 flex items-center">
      <span className="w-[47px] pl-[5px] shrink-0">Mode</span>
      <div className="w-[311px] h-[24px] bg-[#50565c] border border-[#6a7076] rounded-[3px] flex items-center justify-between pl-[4px] pr-[6px]">Current Layer<Caret /></div>
    </div>
    <div className="h-[24px] shrink-0 flex items-center text-[#6c7176] mt-[1px]">
      <span className="w-[42px] pl-[5px] shrink-0">View</span>
      <div className="w-[77px] h-[24px] bg-[#474c52] border border-[#5a6066] rounded-[3px] flex items-center justify-between pl-[4px] pr-[16px]">Tree<Caret c="#6c7176" /></div>
    </div>
  </div>
);

const Spin = ({ w, text }) => (
  <div className={`${w} h-[24px] shrink-0 bg-[#2a2e32] border border-[#25282c] rounded-[3px] flex items-center text-[12px] text-[#eff0f1] overflow-hidden`}>
    <span className="flex-1 pl-[4px] whitespace-nowrap">{text}</span>
    <span className="w-[12px] h-full bg-[#5a6067] flex flex-col items-center justify-center gap-[2px]"><Caret dir="up" s={7} /><Caret dir="down" s={7} /></span>
  </div>
);
const StatusBar = () => (
  <div className="h-[33px] shrink-0 pt-[1px] flex items-center text-[12px] text-[#eff0f1] relative">
    <div className="ml-[4px] w-[234px] h-[26px] shrink-0 bg-[#2a2e32] border border-[#25282c] rounded-[3px] flex items-center pl-[7px] text-[13px] text-[#8d9296]"><Search size={14} strokeWidth={1.5} /><span className="ml-[5px]">Type to locate (Ctrl+K)</span></div>
    <span className="ml-[9px] w-[832px] text-[11px] text-[#121416] whitespace-nowrap">8 features selected on layer airports.</span>
    <span className="w-[61px] text-[#8d9296] shrink-0">Coordinate</span>
    <div className="w-[105px] h-[24px] shrink-0 bg-[#2a2e32] border border-[#25282c] rounded-[3px] flex items-center pl-[3px] text-[#a0a4a8]">2695412,5091242</div>
    <svg width="16" height="18" viewBox="0 0 16 18" className="ml-[6px] shrink-0"><path d="M3 1 L8 6 L12 2 L11 8 C14 11 12 16 8 16 C4 16 2 12 5 8 Z" fill="#eceded" /><circle cx="8" cy="11" r="2.5" fill="#333" /></svg>
    <span className="ml-[8px] w-[31px] shrink-0">Scale</span>
    <div className="w-[86px] h-[24px] shrink-0 bg-[#2a2e32] border border-[#25282c] rounded-[3px] flex items-center overflow-hidden text-[11.5px]"><span className="flex-1 pl-[3px]">1:4963766</span><span className="w-[18px] h-full bg-[#5a6067] flex items-center justify-center"><Caret /></span></div>
    <Lock size={14} strokeWidth={2} fill="#8d9296" color="#8d9296" className="ml-[12px] shrink-0" />
    <span className="ml-[9px] w-[53px] shrink-0 text-[11.5px]">Magnifier</span>
    <Spin w="w-[89px]" text="100%" />
    <span className="ml-[10px] w-[53px] shrink-0 text-[11.5px]">Rotation</span>
    <Spin w="w-[89px]" text="0.0 °" />
    <span className="ml-[8px] w-[14px] h-[14px] shrink-0 bg-[#2a2e32] border border-[#3a3f44] flex items-center justify-center"><Check size={11} strokeWidth={2.4} /></span>
    <span className="ml-[5px] w-[44px] shrink-0">Render</span>
    <Globe size={13} strokeWidth={1.6} color="#c9cccf" className="ml-[9px] shrink-0" />
    <span className="ml-[5px] w-[60px] shrink-0">EPSG:2964</span>
    <MessageCircleMore size={17} fill="#c9cccf" color="#31363b" strokeWidth={1.6} className="ml-[19px] shrink-0" />
  </div>
);

const Cell = ({ children }) => <div className="w-[58px] h-[50px] shrink-0 flex items-center justify-center">{children}</div>;
const Dot = ({ cls }) => <span className={`absolute top-[52px] w-[4px] h-[4px] rounded-full bg-[#9c5092] ${cls}`} />;
const Dock = () => (
  <div className="absolute left-[687px] top-[1016px] w-[546px] h-[58px] rounded-[9px] bg-[rgba(49,54,59,0.7)] border-t-2 border-x border-[rgba(255,255,255,0.25)] border-b-[rgba(0,0,0,0.1)] flex items-center">
    <div className="flex pl-[11px] -mt-[3px] items-center">
      <Cell><svg width="46" height="44" viewBox="0 0 46 44"><path d="M3 4 H20 L25 8 H42 V14 H3 Z" fill="#f5f5f5" /><rect x="1" y="12" width="44" height="31" rx="1" fill="#6ba4e0" stroke="#3f78b8" strokeWidth=".5" /><path d="M23 18 L33 27 H30 V36 H25 V30 H21 V36 H16 V27 H13 Z" fill="#3d7ab8" /></svg></Cell>
      <Cell><div className="relative w-[46px] h-[46px]">
        <svg width="46" height="46" viewBox="0 0 46 46"><circle cx="23" cy="26" r="20" fill="#ef5138" /><path d="M32 4 C38 12 44 20 42 30 C38 14 28 14 20 12 C26 12 30 9 32 4 Z" fill="#ff9d1e" /><circle cx="24" cy="25" r="13" fill="#ffa52a" /><circle cx="24" cy="25" r="9" fill="#9448e0" /></svg>
        <div className="absolute -left-[1px] top-0 w-[20px] h-[24px] rounded-full bg-[#2b2f33] flex items-center justify-center"><Volume2 size={14} color="#eff0f1" strokeWidth={1.5} /></div>
      </div></Cell>
      <Cell><div className="w-[42px] h-[44px] bg-[#232629] rounded-[3px] border border-[#3a3f44] relative text-[#eff0f1] font-['DejaVu_Sans_Mono',monospace] font-bold text-[15px] leading-none pl-[7px] pt-[8px]">$<span className="ml-[2px]">_</span></div></Cell>
      <Cell><svg width="46" height="46" viewBox="0 0 46 46"><circle cx="23" cy="23" r="22" fill="#f3f3ef" /><path d="M23 8 C32 8 37 15 35 24 L37 32 H28 C26 28 20 28 18 32 H9 L11 24 C9 15 14 8 23 8 Z" fill="#7ecb4e" /><circle cx="23" cy="20" r="8" fill="#f3f3ef" /></svg></Cell>
      <Cell><svg width="46" height="46" viewBox="0 0 46 46"><circle cx="23" cy="23" r="22" fill="#2090ea" /><circle cx="23" cy="22" r="13" fill="#fff" /><path d="M14 30 L11 37 L19 33 Z" fill="#fff" /></svg></Cell>
      <Cell><div className="w-[46px] h-[46px] rounded-full bg-[#6b5fb0] border-[4px] border-[#a18be0] flex flex-col items-center justify-center text-[#eff0f1] font-['DejaVu_Sans_Mono',monospace] text-[13px] font-bold leading-none"><span>IJ</span><span className="w-[11px] h-[2px] bg-[#eff0f1] mt-[4px]" /></div></Cell>
      <Cell><svg width="46" height="46" viewBox="0 0 46 46"><circle cx="23" cy="23" r="22" fill="#6ea0ee" /><path d="M3 15 A22 22 0 0 1 43 15 H23 Z" fill="#3d6fd6" /><path d="M33 31 L25 45 A22 22 0 0 0 42 14 H30 Z" fill="#9cbdf5" /><circle cx="23" cy="23" r="10" fill="#6ea0ee" stroke="#fff" strokeWidth="2" /></svg></Cell>
      <Cell><div className="w-[38px] h-[44px] bg-[#232629] rounded-[3px] border border-[#3a3f44] relative overflow-hidden">
        <span className="absolute left-[6px] top-0 w-[8px] h-[17px] bg-[#cf3a36]" />
        <svg className="absolute inset-0" width="38" height="44" viewBox="0 0 38 44"><path d="M37 13 C24 22 20 36 28 43 L38 43 Z" fill="#2c8fe0" /><path d="M38 15 C28 24 26 34 32 43 L38 43 Z" fill="#232629" /></svg>
      </div></Cell>
      <Cell><svg width="50" height="50" viewBox="0 0 50 50"><circle cx="24" cy="23" r="17" fill="none" stroke="#81a423" strokeWidth="10" /><path d="M28 27 L44 46 L38 50 L24 32 Z" fill="#6aa637" /><path d="M19 19 L27 15 L32 27 L26 30 Z" fill="#ef9a2f" /><path d="M22 22 L28 19 L31 26 L26 28 Z" fill="#f4d13a" /></svg></Cell>
    </div>
    <Dot cls="left-[39px]" /><Dot cls="left-[97px]" /><Dot cls="left-[271px]" /><Dot cls="left-[329px]" /><Dot cls="left-[383px]" /><Dot cls="left-[391px]" /><Dot cls="left-[445px]" />
    <span className="absolute left-[476px] top-[52px] w-[57px] h-[4px] rounded-full bg-[#9c5092]" />
  </div>
);

export default function App() {
  return (
    <div className="relative w-[1920px] h-[1080px] overflow-hidden bg-[#31363b] font-['Noto_Sans',sans-serif] flex flex-col">
      <div className="h-[31px] shrink-0 bg-[#2f3338] border-b border-[#26292d] flex items-center pl-[5px]">
        <div className="w-[126px] h-[20px] bg-[#0e0f10] rounded-[4px] flex items-center text-[#d8d8d8]">
          <svg width="13" height="13" viewBox="0 0 13 13" className="ml-[25px]"><g fill="#e6e6e6">{[1, 5.5, 10].flatMap(x => [1, 5.5, 10].map(y => <rect key={`${x}${y}`} x={x} y={y} width="2" height="2" />))}</g></svg>
          <svg width="11" height="13" viewBox="0 0 11 13" className="ml-[20px]"><rect x="1" y="1" width="9" height="11" rx="1" fill="none" stroke="#e6e6e6" /></svg>
          <svg width="12" height="13" viewBox="0 0 12 13" className="ml-[20px]"><path d="M1 7 H8 V2 M4 10 H11 M1 12 H5 M6 6 H11" stroke="#e6e6e6" fill="none" /></svg>
        </div>
        <div className="flex-1" />
        <div className="flex items-center text-[#dfe1e3] w-[293px]">
          <BellRing size={13} strokeWidth={1.4} className="ml-[2px]" />
          <Feather size={14} strokeWidth={2} fill="#dfe1e3" className="ml-[9px]" />
          <CirclePause size={13} strokeWidth={1.4} className="ml-[8px]" />
          <ClipboardList size={13} strokeWidth={1.4} className="ml-[9px]" />
          <Volume2 size={14} strokeWidth={1.4} className="ml-[8px]" />
          <Smartphone size={13} strokeWidth={1.6} className="ml-[9px]" />
          <Wifi size={14} strokeWidth={1.2} color="#8d9296" className="ml-[8px]" />
          <span className="ml-[13px]"><Caret c="#dfe1e3" s={9} /></span>
          <span className="ml-[11px] text-[13px] text-[#eff0f1] whitespace-nowrap tracking-[0.2px]">02.11.2021 &nbsp;23:06</span>
        </div>
      </div>
      <div className="h-[35px] shrink-0 relative flex items-center pl-[7px] pr-[9px] border-b border-[#63686e]">
        <Logo s={23} />
        <span className="ml-[5px]"><Grip c="#7c8186" s={17} /></span>
        <span className="flex-1 text-center text-[13px] text-[#8d9296] pr-[2px]">*lab4 — QGIS</span>
        <WinBtns c="#7c8186" gap="gap-[9px]" />
      </div>
      <div className="h-[39px] shrink-0 flex items-center border-b border-[#5a5f65] pl-[5px] pb-[2px]">
        <Handle /><I k="newdoc" s={20} cls="ml-[8px]" />
        <div className="w-[800px]" />
        <div className="w-[30px] h-[30px] bg-[#4b5157] border border-[#6a7076] rounded-[3px] flex items-center justify-center"><svg width="22" height="22" viewBox="0 0 22 22"><circle cx="11" cy="11" r="5.5" fill="none" stroke="#7fb2ea" strokeWidth="3" /><g stroke="#7fb2ea" strokeWidth="3">{[0, 45, 90, 135].map(a => <path key={a} d="M11 0 V22" transform={`rotate(${a} 11 11)`} strokeDasharray="4 14" />)}</g></svg></div>
        <span className="ml-[10px] text-[24px] leading-none text-[#a80aa0] font-['Liberation_Serif',serif]">Σ</span>
        <span className="ml-[15px]"><I k="tableview" s={20} /></span>
        <span className="ml-[8px]"><Caret s={9} /></span>
        <svg width="22" height="18" viewBox="0 0 22 18" className="ml-[10px]"><path d="M1 3H21" stroke="#3f6fa8" strokeWidth="1.6" /><rect x="0" y="8" width="22" height="8" fill="#c8c8c8" /><path d="M3 8V12M6 8V12M9 8V12M12 8V12M15 8V12M18 8V12" stroke="#444" /></svg>
        <span className="ml-[8px]"><Caret s={9} /></span>
        <svg width="22" height="20" viewBox="0 0 22 20" className="ml-[6px]"><rect x="0" y="1" width="22" height="13" rx="4" fill="#f4d84c" /><path d="M3 19 L8 13 H4 Z" fill="#7ab86a" /></svg>
        <svg width="20" height="18" viewBox="0 0 20 18" className="ml-[9px]"><circle cx="10" cy="9" r="6.5" fill="none" stroke="#5f6367" strokeWidth="3" strokeDasharray="3 1" /></svg>
        <span className="ml-[7px]"><Caret s={8} c="#6c7176" /></span>
        <div className="ml-[13px] w-[18px] h-[14px] bg-[#e3e7ea] flex items-center justify-center text-[12px] font-bold leading-none text-[#333] font-['Liberation_Serif',serif]">T</div>
        <span className="ml-[8px]"><Caret s={8} /></span>
      </div>
      <div className="h-[39px] shrink-0 flex items-center border-b border-[#5a5f65] pl-[5px]">
        <Handle /><I k="newl" s={22} cls="ml-[9px]" />
        <div className="w-[804px]" />
        {['M', 'L', 'R', 'S'].map((x, i) => (
          <svg key={x} width="24" height="22" viewBox="0 0 24 22" className={i ? 'ml-[9px]' : ''}><path d="M5 3 H20 V12 H5 L1 7.5 Z" fill="#54544f" /><text x="5.5" y="11" fontSize="9" fill="#7a7a72" fontFamily="Noto Sans">abc</text><rect x="14" y="12" width="9" height="9" rx="1" fill="#464a4c" /></svg>
        ))}
        <span className="ml-[17px]"><Handle /></span>
      </div>
      <div className="h-[38px] shrink-0 flex items-center border-b border-[#63686e] pl-[5px]">
        <Handle /><I k="selcur" s={22} cls="ml-[9px]" />
        <span className="ml-[5px]"><Caret s={7} /></span>
      </div>
      <div className="flex-1 flex min-h-0">
        <LeftPanel />
        <div className="w-[7px] shrink-0" />
        <div className="w-[1366px] shrink-0 relative overflow-hidden"><MapDrawing /></div>
        <RightPanel />
      </div>
      <StatusBar />
      <Dock />
      <AttributeWindow />
      <StatsWindow />
    </div>
  );
}
